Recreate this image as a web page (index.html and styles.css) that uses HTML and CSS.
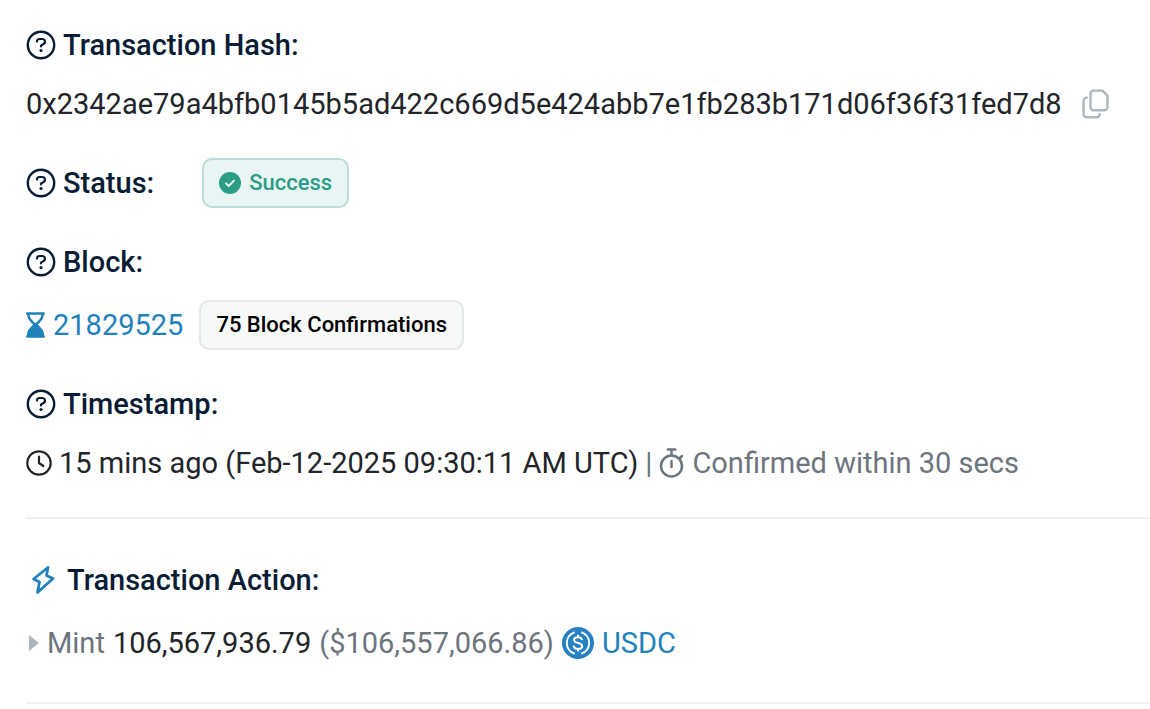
FILE: index.html
```html
<!DOCTYPE html>
<html lang="en">
<head>
    <meta charset="UTF-8">
    <meta name="viewport" content="width=device-width, initial-scale=1.0">
    <title>Transaction Details</title>
    <link rel="stylesheet" href="styles.css">
</head>
<body>

    <!-- Shared help icon -->
    <svg class="sprite" aria-hidden="true">
        <symbol id="icon-help" viewBox="0 0 30 30">
            <circle cx="15" cy="15" r="13.2" fill="none" stroke="currentColor" stroke-width="2.4"/>
            <path d="M11 11.6v-.2A2.4 2.4 0 0 1 13.400 9h2.800a2.700 2.700 0 0 1 1.300 5.100L15 15.500v1" fill="none" stroke="currentColor" stroke-width="2.2" stroke-linecap="round" stroke-linejoin="round"/>
            <circle cx="15" cy="20.500" r="1.600" fill="currentColor"/>
        </symbol>
    </svg>

    <main class="details">

        <!-- Transaction hash -->
        <section class="field">
            <h2 class="label"><svg class="icon-help"><use href="#icon-help"/></svg>Transaction Hash:</h2>
            <div class="value">
                <span>0x2342ae79a4bfb0145b5ad422c669d5e424abb7e1fb283b171d06f36f31fed7d8</span>
                <button class="copy-btn" type="button" aria-label="Copy transaction hash">
                    <svg width="28" height="30" viewBox="0 0 28 30" fill="none" stroke="currentColor" stroke-width="2.4" stroke-linejoin="round" stroke-linecap="round">
                        <path d="M11.5 1.6h9l4.900 4.700v11.900a3 3 0 0 1-3 3H11.5a3 3 0 0 1-3-3V4.6a3 3 0 0 1 3-3z"/>
                        <path d="M4.900 8.600h-.3a3 3 0 0 0-3 3v13.600a3 3 0 0 0 3 3h10.200a3 3 0 0 0 3-3v-.3"/>
                    </svg>
                </button>
            </div>
        </section>

        <!-- Status -->
        <section class="field field-inline">
            <h2 class="label"><svg class="icon-help"><use href="#icon-help"/></svg>Status:</h2>
            <span class="badge badge-success">
                <svg width="22" height="22" viewBox="0 0 22 22">
                    <circle cx="11" cy="11" r="11" fill="currentColor"/>
                    <path d="M7 11.4l2.7 2.6 5.2-5.4" fill="none" stroke="#e8f5f4" stroke-width="2" stroke-linecap="round" stroke-linejoin="round"/>
                </svg>
                Success
            </span>
        </section>

        <!-- Block -->
        <section class="field">
            <h2 class="label"><svg class="icon-help"><use href="#icon-help"/></svg>Block:</h2>
            <div class="value value-block">
                <svg class="icon-blue" width="19" height="26" viewBox="0 0 19 26">
                    <path d="M1.3 1.5h16.4M1.3 24.5h16.4" stroke="currentColor" stroke-width="2.600" stroke-linecap="round"/>
                    <path d="M2.5 2v1.500c0 3.500 3 6 7 9.500 4-3.500 7-6 7-9.500V2" fill="none" stroke="currentColor" stroke-width="2.500"/>
                    <path d="M1 24v-1.500c0-4.500 3.500-7 6.500-10.500h4c3 3.500 6.500 6 6.500 10.500V24z" fill="currentColor"/>
                </svg>
                <a href="#">21829525</a>
                <span class="badge">75 Block Confirmations</span>
            </div>
        </section>

        <!-- Timestamp -->
        <section class="field">
            <h2 class="label"><svg class="icon-help"><use href="#icon-help"/></svg>Timestamp:</h2>
            <div class="value value-time">
                <svg width="26" height="26" viewBox="0 0 26 26" fill="none" stroke="currentColor" stroke-width="2.2" stroke-linecap="round" stroke-linejoin="round">
                    <circle cx="13" cy="13" r="11.7"/>
                    <path d="M13 6.5V13l4.300 3"/>
                </svg>
                <span>15 mins ago (Feb-12-2025 09:30:11 AM UTC)</span>
                <span class="muted">|</span>
                <svg class="muted" width="26" height="30" viewBox="0 0 26 30" fill="none" stroke="currentColor" stroke-width="2.5" stroke-linecap="round">
                    <circle cx="12.5" cy="18" r="10.5"/>
                    <path d="M8.8 1.5h7.4M12.5 1.5V7M12.5 13v6M20.5 10.500l2.500-2.500"/>
                </svg>
                <span class="muted">Confirmed within 30 secs</span>
            </div>
        </section>

        <hr>

        <!-- Transaction action -->
        <section class="field action">
            <h2 class="label">
                <svg class="icon-bolt" width="24" height="30" viewBox="0 0 24 30" fill="none" stroke="currentColor" stroke-width="2.8" stroke-linejoin="round">
                    <path d="M17 2.500L2.500 14l6 3-2 10.500L22 13.500l-6.500-3z"/>
                </svg>
                Transaction Action:
            </h2>
            <div class="value value-action">
                <svg class="caret" width="10" height="16" viewBox="0 0 10 16"><path d="M0 0l10 8-10 8z" fill="currentColor"/></svg>
                <span class="muted">Mint</span>
                <span>106,567,936.79</span>
                <span class="muted">($106,557,066.86)</span>
                <a class="token" href="#">
                    <svg width="32" height="32" viewBox="0 0 32 32" fill="none" stroke="#fff" stroke-width="2">
                        <circle cx="16" cy="16" r="16" fill="#2681c4" stroke="none"/>
                        <path d="M12.7 5.300a11.2 11.2 0 0 0 0 21.400M19.3 5.300a11.2 11.2 0 0 1 0 21.400"/>
                        <path d="M20 13.200c-.2-1.900-1.700-2.900-4-2.900-2.500 0-3.900 1.100-3.900 2.700 0 4.200 8.100 1.800 8.100 6 0 1.800-1.600 2.900-4.200 2.900s-4.200-1.200-4.300-3.300M16 7.800v2.500M16 21.900v2.500"/>
                    </svg>
                    USDC
                </a>
            </div>
        </section>

        <hr>

    </main>

</body>
</html>
```

FILE: styles.css
```css
body {
    font-family: Roboto, Arial, sans-serif;
    font-size: 29px;
    line-height: 34px;
    color: #212529;
    background-color: #fff;
    margin: 0;
}
.sprite {
    display: none;
}
svg {
    flex-shrink: 0;
}
.details {
    display: flow-root;
    padding-left: 26px;
}
.field {
    margin-top: 37px;
}
.field:first-child {
    margin-top: 28px;
}
.field-inline {
    display: flex;
    align-items: center;
    gap: 48px;
}
.label {
    display: flex;
    align-items: center;
    gap: 7px;
    margin: 0;
    font-size: 29px;
    font-weight: 500;
    color: #081d35;
}
.icon-help {
    width: 30px;
    height: 30px;
}
.value {
    display: flex;
    flex-wrap: wrap;
    align-items: center;
    gap: 8px;
    margin-top: 25px;
}
.value-block {
    margin-top: 21px;
}
.value-time {
    gap: 8px 7px;
}
.value-action {
    margin-top: 29px;
}
.muted {
    color: #6c757d;
}
a,
.icon-blue,
.icon-bolt {
    color: #1f82bb;
    text-decoration: none;
}

/* Copy button */
.copy-btn {
    display: flex;
    margin-left: 12px;
    padding: 0;
    border: none;
    background: none;
    color: #adb5bd;
    cursor: pointer;
}

/* Badges */
.badge {
    display: inline-flex;
    align-items: center;
    gap: 8px;
    padding: 6px 15px;
    border: 2px solid #e4e7e8;
    border-radius: 10px;
    background-color: #f7f8f8;
    color: #000;
    font-size: 22px;
    font-weight: 500;
}
.badge-success {
    border-color: #bcdcd9;
    background-color: #e8f5f4;
    color: #2b9d87;
}
.value-block .badge {
    margin-left: 8px;
}

hr {
    margin: 37px 0 0;
    border: none;
    border-top: 2px solid #eef0f1;
}

/* Transaction action */
.action {
    margin-top: 44px;
}
.action .label {
    gap: 12px;
    padding-left: 5px;
}
.action + hr {
    margin-top: 42px;
}
.caret {
    margin-left: 3px;
    color: #adb5bd;
}
.token {
    display: flex;
    align-items: center;
    gap: 8px;
}
```
